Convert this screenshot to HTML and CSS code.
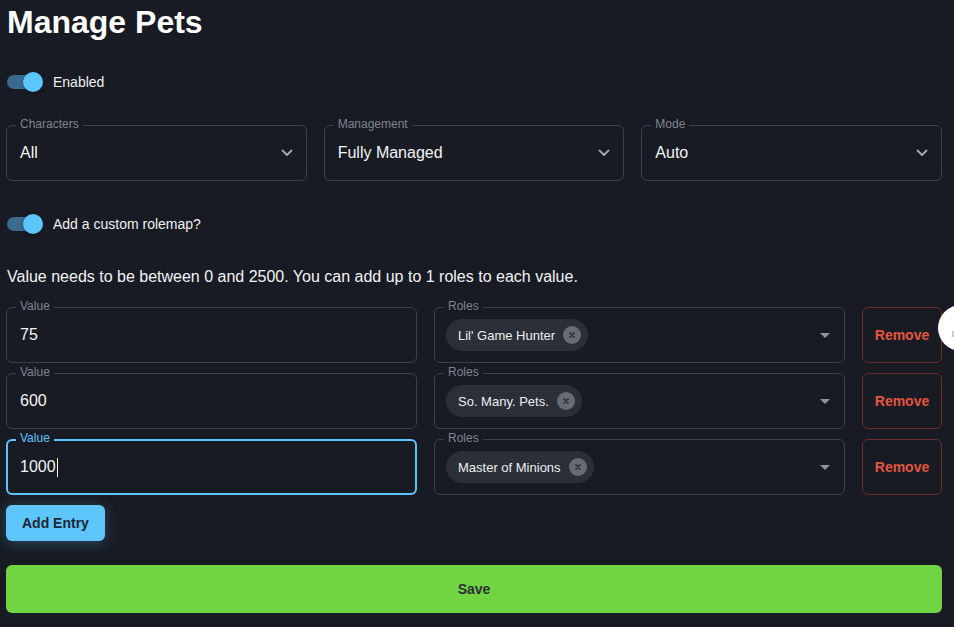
FILE: index.html
```html
<!DOCTYPE html>
<html lang="en">
<head>
<meta charset="utf-8">
<title>Manage Pets</title>
<link rel="stylesheet" href="styles.css">
</head>
<body>
<div class="page">
  <h1 class="title">Manage Pets</h1>

  <div class="switch-row first">
    <span class="switch"><span class="track"></span><span class="thumb"></span></span>
    <span class="switch-label">Enabled</span>
  </div>

  <div class="selects">
    <div class="field">
      <span class="legend">Characters</span>
      <span class="field-value">All</span>
      <svg class="chevron" viewBox="0 0 12 8" width="12" height="8"><path d="M1.5 1.5 L6 6 L10.5 1.5" fill="none" stroke="#a3a8b2" stroke-width="1.8" stroke-linecap="round" stroke-linejoin="round"/></svg>
    </div>
    <div class="field">
      <span class="legend">Management</span>
      <span class="field-value">Fully Managed</span>
      <svg class="chevron" viewBox="0 0 12 8" width="12" height="8"><path d="M1.5 1.5 L6 6 L10.5 1.5" fill="none" stroke="#a3a8b2" stroke-width="1.8" stroke-linecap="round" stroke-linejoin="round"/></svg>
    </div>
    <div class="field">
      <span class="legend">Mode</span>
      <span class="field-value">Auto</span>
      <svg class="chevron" viewBox="0 0 12 8" width="12" height="8"><path d="M1.5 1.5 L6 6 L10.5 1.5" fill="none" stroke="#a3a8b2" stroke-width="1.8" stroke-linecap="round" stroke-linejoin="round"/></svg>
    </div>
  </div>

  <div class="switch-row second">
    <span class="switch"><span class="track"></span><span class="thumb"></span></span>
    <span class="switch-label">Add a custom rolemap?</span>
  </div>

  <p class="hint">Value needs to be between 0 and 2500. You can add up to 1 roles to each value.</p>

  <div class="rows">
    <div class="entry">
      <div class="field">
        <span class="legend">Value</span>
        <span class="field-value">75</span>
      </div>
      <div class="field roles">
        <span class="legend">Roles</span>
        <span class="chip">Lil' Game Hunter<span class="chip-x"><svg viewBox="0 0 8 8" width="8" height="8"><path d="M2 2 L6 6 M6 2 L2 6" stroke="#34373e" stroke-width="1.8" stroke-linecap="round"/></svg></span></span>
        <svg class="caret-down" viewBox="0 0 10 5" width="10" height="5"><path d="M0 0 H10 L5 5 Z" fill="#8f949e"/></svg>
      </div>
      <button class="remove">Remove</button>
    </div>

    <div class="entry">
      <div class="field">
        <span class="legend">Value</span>
        <span class="field-value">600</span>
      </div>
      <div class="field roles">
        <span class="legend">Roles</span>
        <span class="chip">So. Many. Pets.<span class="chip-x"><svg viewBox="0 0 8 8" width="8" height="8"><path d="M2 2 L6 6 M6 2 L2 6" stroke="#34373e" stroke-width="1.8" stroke-linecap="round"/></svg></span></span>
        <svg class="caret-down" viewBox="0 0 10 5" width="10" height="5"><path d="M0 0 H10 L5 5 Z" fill="#8f949e"/></svg>
      </div>
      <button class="remove">Remove</button>
    </div>

    <div class="entry">
      <div class="field focused">
        <span class="legend">Value</span>
        <span class="field-value">1000<span class="text-caret"></span></span>
      </div>
      <div class="field roles">
        <span class="legend">Roles</span>
        <span class="chip">Master of Minions<span class="chip-x"><svg viewBox="0 0 8 8" width="8" height="8"><path d="M2 2 L6 6 M6 2 L2 6" stroke="#34373e" stroke-width="1.8" stroke-linecap="round"/></svg></span></span>
        <svg class="caret-down" viewBox="0 0 10 5" width="10" height="5"><path d="M0 0 H10 L5 5 Z" fill="#8f949e"/></svg>
      </div>
      <button class="remove">Remove</button>
    </div>
  </div>

  <button class="add-entry">Add Entry</button>

  <button class="save">Save</button>
</div>
<div class="float-circle"><span class="float-dot"></span></div>
</body>
</html>
```

FILE: styles.css
```css
html, body {
  margin: 0;
  padding: 0;
  background: #181b23;
  height: 100%;
  overflow: hidden;
}

body {
  font-family: "Liberation Sans", Arial, Helvetica, sans-serif;
  color: #ffffff;
  position: relative;
}

.page {
  width: 936px;
  padding: 3px 12px 0 6px;
}

.title {
  margin: 0 0 0 1px;
  font-size: 32px;
  line-height: 38px;
  font-weight: 700;
  color: #ffffff;
}

.switch-row {
  display: flex;
  align-items: center;
  gap: 11px;
  height: 20px;
  padding-left: 1px;
}

.switch-row.first { margin-top: 31px; }
.switch-row.second { margin-top: 33px; }

.switch {
  position: relative;
  width: 35px;
  height: 20px;
  display: inline-block;
  flex: none;
}

.track {
  position: absolute;
  left: 0;
  top: 3px;
  width: 34px;
  height: 14px;
  border-radius: 7px;
  background: #3a6a8e;
}

.thumb {
  position: absolute;
  left: 16px;
  top: 0;
  width: 20px;
  height: 20px;
  border-radius: 50%;
  background: #5ac6fb;
  box-shadow: 0 1px 3px rgba(0, 0, 0, 0.35);
}

.switch-label {
  font-size: 14px;
  color: #eef0f3;
}

.selects {
  margin-top: 33px;
  display: grid;
  grid-template-columns: 1fr 1fr 1fr;
  gap: 17px;
}

.field {
  position: relative;
  height: 56px;
  box-sizing: border-box;
  border: 1px solid #3c404b;
  border-radius: 6px;
  display: flex;
  align-items: center;
  padding: 0 13px;
}

.legend {
  position: absolute;
  top: -9px;
  left: 9px;
  padding: 0 4px;
  font-size: 12px;
  line-height: 14px;
  color: #7f848e;
  background: #181b23;
}

.field-value {
  font-size: 16px;
  color: #f2f3f5;
  flex: 1;
  display: flex;
  align-items: center;
}

.chevron {
  flex: none;
  margin-right: 0;
}

.hint {
  margin: 33px 0 0 1px;
  font-size: 16px;
  line-height: 20px;
  color: #f2f3f5;
}

.rows {
  margin-top: 20px;
  display: flex;
  flex-direction: column;
  gap: 10px;
}

.entry {
  display: grid;
  grid-template-columns: 411px 411px 80px;
  gap: 17px;
}

.field.focused {
  border: 2px solid #5ac6fb;
  padding: 0 12px;
}

.field.focused .legend {
  color: #5ac6fb;
  top: -10px;
  left: 8px;
}

.text-caret {
  display: inline-block;
  width: 1px;
  height: 19px;
  background: #ffffff;
  margin-left: 1px;
}

.field.roles {
  padding: 0 13px 0 11px;
  justify-content: space-between;
}

.chip {
  display: inline-flex;
  align-items: center;
  height: 32px;
  box-sizing: border-box;
  padding: 0 7px 0 12px;
  border-radius: 16px;
  background: #2b2f38;
  font-size: 13px;
  color: #eceef1;
  gap: 8px;
}

.chip-x {
  width: 18px;
  height: 18px;
  border-radius: 50%;
  background: #686b73;
  display: inline-flex;
  align-items: center;
  justify-content: center;
}

.caret-down {
  flex: none;
  margin-right: 1px;
}

.remove {
  height: 56px;
  box-sizing: border-box;
  border: 1px solid #6e2b29;
  border-radius: 6px;
  background: transparent;
  color: #e5553e;
  font-family: inherit;
  font-size: 14px;
  font-weight: 700;
  padding: 0;
  cursor: pointer;
}

.add-entry {
  display: block;
  margin-top: 10px;
  height: 36px;
  padding: 0 16px;
  border: none;
  border-radius: 6px;
  background: #5ec5fb;
  color: #1c2733;
  font-family: inherit;
  font-size: 14px;
  font-weight: 700;
  box-shadow: 0 2px 14px rgba(94, 197, 251, 0.28);
  cursor: pointer;
}

.save {
  display: block;
  margin-top: 24px;
  width: 936px;
  height: 48px;
  border: none;
  border-radius: 6px;
  background: #70d443;
  color: #2a2f33;
  font-family: inherit;
  font-size: 14px;
  font-weight: 700;
  cursor: pointer;
}

.float-circle {
  position: absolute;
  left: 938px;
  top: 305px;
  width: 46px;
  height: 46px;
  border-radius: 50%;
  background: #ffffff;
}

.float-dot {
  position: absolute;
  left: 14px;
  top: 26px;
  width: 2px;
  height: 6px;
  background: #c9cbd0;
}
```
